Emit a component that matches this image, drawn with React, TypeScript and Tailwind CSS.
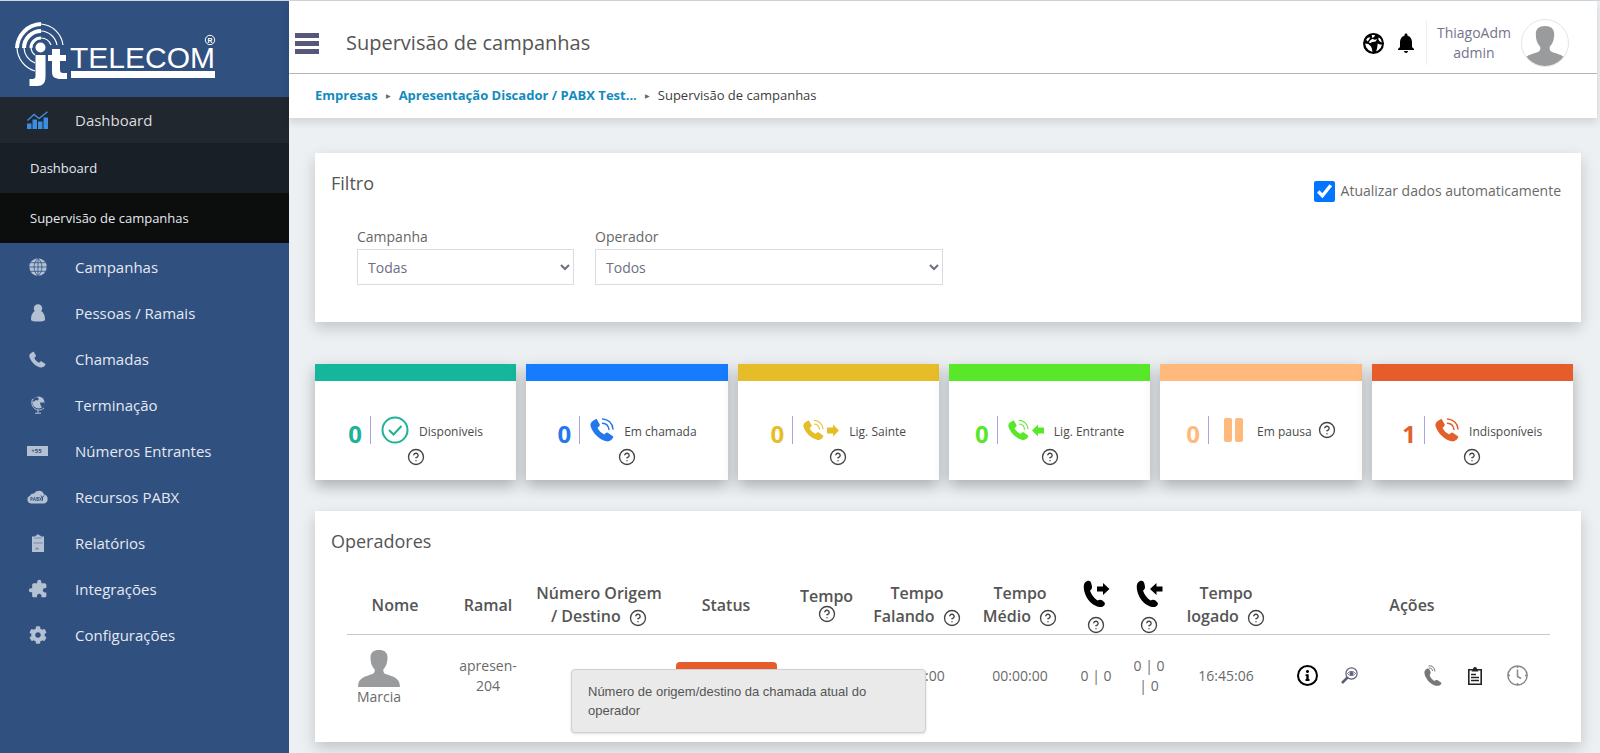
import React, { useState } from 'react';
import { CircleHelp } from 'lucide-react';
import { FaCog, FaInfo } from 'react-icons/fa';
import { MdExtension, MdNotifications } from 'react-icons/md';

interface IconProps {
  className?: string;
}

interface MenuItem {
  label: string;
  icon: React.ReactNode;
}

interface StatCard {
  label: string;
  value: number;
  bar: string;
  text: string;
  icon: React.ReactNode;
}

const HANDSET =
  'M4 1C6 0 8 1 8.5 4L9 7C9 9 8 10 7 10.5C8 14 11 18 14.5 20.5C16 19.5 18 19.5 19.5 20.5L21.5 22.5C22.5 24 21.5 26 19 27C14 27.5 7 24 3.5 17C.5 11-1 3 4 1Z';

const ROUND_HANDSET =
  'M3.500 2.500L6.500.8L9.800 6.500C10 7.500 9 9 7.500 9.800C8.500 12.500 11.500 15.300 14.500 16.500C15.500 15 16.800 14.300 17.800 14.700L23.300 18.500C23.500 20.500 20 24 16.500 23.300C9 21.500 2.500 15 .5 8C0 5.500 1.500 3.500 3.500 2.500Z';

const HelpIcon: React.FC = () => (
  <CircleHelp className="inline-block size-[18px] shrink-0 text-[#444]" strokeWidth={1.8} />
);

const CallOutIcon: React.FC<IconProps> = ({ className }) => (
  <svg viewBox="0 0 27 28" className={className} fill="currentColor">
    <path d={HANDSET} />
    <path d="M14 6.500h6V3l6.500 6-6.500 6v-3.500h-6z" />
  </svg>
);

const CallInIcon: React.FC<IconProps> = ({ className }) => (
  <svg viewBox="0 0 27 28" className={className} fill="currentColor">
    <path d={HANDSET} />
    <path d="M26.500 6.500h-6V3L14 9l6.500 6v-3.500h6z" />
  </svg>
);

const RingingIcon: React.FC<IconProps> = ({ className }) => (
  <svg viewBox="0 0 24 24" className={className} fill="currentColor">
    <path d={ROUND_HANDSET} />
    <path
      d="M12.500.9C18 1.200 22.500 5 23 11M12.500 5.200C16 5.300 18.500 8 19 11.500"
      fill="none"
      stroke="currentColor"
      strokeWidth="1.500"
      strokeLinecap="round"
    />
  </svg>
);

const RingingArrowIcon: React.FC<{ incoming?: boolean }> = ({ incoming }) => (
  <svg viewBox="0 0 36 22" className="h-[22px] w-9" fill="currentColor">
    <svg width="21" height="22" viewBox="0 0 24 24">
      <path d={ROUND_HANDSET} />
      <path
        d="M12.500.9C18 1.200 22.500 5 23 11M12.500 5.200C16 5.300 18.500 8 19 11.500"
        fill="none"
        stroke="currentColor"
        strokeWidth="1.300"
      />
    </svg>
    {incoming ? (
      <path d="M36 8.500h-6V5.500L24 11.500l6 6v-3h6z" />
    ) : (
      <path d="M24 8.500h6V5.500l6 6-6 6v-3h-6z" />
    )}
  </svg>
);

const CheckIcon: React.FC = () => (
  <svg viewBox="0 0 28 28" className="size-7" fill="none" stroke="currentColor" strokeWidth="2">
    <circle cx="14" cy="14" r="12.500" />
    <path d="M8 14l4.500 4.500L20.500 10" />
  </svg>
);

const PauseIcon: React.FC = () => (
  <svg viewBox="0 0 20 26" className="mx-1 h-[26px] w-5" fill="currentColor">
    <rect x="1" y="1" width="8" height="24" rx="2" />
    <rect x="12" y="1" width="8" height="24" rx="2" />
  </svg>
);

const PersonShape: React.FC<IconProps> = ({ className }) => (
  <svg viewBox="0 0 42 37" className={className} fill="#999b9d">
    <path d="M21 0C26.500 0 29.500 2.500 29.500 7.500C29.500 12.500 28 17 25.500 19C25 21.500 25.500 23 27.500 24C34 26.500 42 27 42 37H0C0 27 8 26.500 14.500 24C16.500 23 17 21.500 16.500 19C14 17 12.500 12.500 12.500 7.500C12.500 2.500 15.500 0 21 0Z" />
  </svg>
);

const WorldIcon: React.FC = () => (
  <svg viewBox="0 0 20 20" className="size-[21px]">
    <circle cx="10" cy="10" r="9" fill="#000" stroke="#000" strokeWidth="2" />
    <path
      d="M3 6.500L4.500 4.500L7 4L6 6L4.500 8ZM8.500 2L11.500 1.800L10.500 4L8.500 4.500ZM7 7L9 5.500L11 6.500L13.500 6L12 8L9 8.500L7 9.500L5.500 9ZM2 10L5 10.500L7.500 12.500L8.500 15L9 18L5.500 16.500L3 13.500ZM15 4L17 6L18 9L16 8L14.500 6ZM14 10L16 11L18 11L17 14L14.500 16.500L12.500 17.500L13.500 14Z"
      fill="#fff"
    />
  </svg>
);

const ChartIcon: React.FC = () => (
  <svg viewBox="0 0 21 18" className="h-[18px] w-[21px]" fill="#3d8de0">
    <path d="M0 12.500h4.500V18H0zM5.500 8.500H10V18H5.500zM11 10.500h4.500V18H11zM16.500 6.500H21V18h-4.500z" />
    <path d="M.5 9.500L7 3.500L12 7.500L20.500.7" fill="none" stroke="#3d8de0" strokeWidth="1.400" />
  </svg>
);

const GridGlobeIcon: React.FC = () => (
  <svg viewBox="0 0 18 18" className="size-[18px]">
    <circle cx="9" cy="9" r="8.700" fill="currentColor" />
    <path
      d="M9 0v18M0 9h18M1.500 4.700h15M1.500 13.300h15M9 .3C3.800 5 3.800 13 9 17.700M9 .3C14.200 5 14.200 13 9 17.700"
      fill="none"
      stroke="#305080"
      strokeWidth=".8"
    />
  </svg>
);

const UserIcon: React.FC = () => (
  <svg viewBox="0 0 14 18" className="h-[18px] w-3.5" fill="currentColor">
    <circle cx="7" cy="4.500" r="4.200" />
    <path d="M4 7h6C12.500 8.500 14 11 14 16C13 18 1 18 0 16C0 11 1.500 8.500 4 7Z" />
  </svg>
);

const PhoneIcon: React.FC = () => (
  <svg viewBox="0 0 24 24" className="size-[17px]" fill="currentColor">
    <path d={ROUND_HANDSET} />
  </svg>
);

const StandGlobeIcon: React.FC = () => (
  <svg viewBox="0 0 14 18" className="h-[18px] w-3.5">
    <circle cx="7.500" cy="6.500" r="6" fill="currentColor" />
    <path d="M1.500 3C-.5 8 2 13.500 7 14C9.500 14.200 11.500 13.500 13 12M7 14v3M4 17.200h6" fill="none" stroke="currentColor" />
    <path d="M6 1L8 3L6.500 4.500L4.500 4L3 6L2 4.500L3.500 2ZM9 6.500h4.500L13 10l-2 1.500L9.500 9z" fill="#305080" />
  </svg>
);

const NumberIcon: React.FC = () => (
  <svg viewBox="0 0 21 10" className="h-2.5 w-[21px]">
    <rect width="21" height="10" fill="currentColor" />
    <text x="9.500" y="7" fontSize="6" fontWeight="700" textAnchor="middle" fill="#305080">
      +55
    </text>
  </svg>
);

const CloudIcon: React.FC = () => (
  <svg viewBox="0 0 21 14" className="h-3.5 w-[21px]">
    <path
      d="M4 13.500A4 4 0 0 1 3 5.800A4 4 0 0 1 7 3.500A5.500 5.500 0 0 1 17 4.500A4.600 4.600 0 0 1 17 13.500Z"
      fill="currentColor"
    />
    <text x="9" y="11" fontSize="4.500" fontWeight="700" textAnchor="middle" fill="#305080">
      PABX
    </text>
    <path d="M15.500 10.500V7M14 5.500l1.500 2 1.500-2" fill="none" stroke="#305080" />
  </svg>
);

const ReportIcon: React.FC = () => (
  <svg viewBox="0 0 12 18" className="h-[18px] w-3">
    <path d="M0 2.500h3l1-1.300h1a1 1 0 0 1 2 0h1l1 1.300h3V18H0z" fill="currentColor" />
    <path d="M2.500 4h7M1.500 9h9M3 15h4M5 13v2" fill="none" stroke="#305080" strokeWidth=".5" />
  </svg>
);

const InfoIcon: React.FC = () => (
  <span className="flex size-[21px] items-center justify-center rounded-full border-2 border-black">
    <FaInfo className="size-[11px] text-black" />
  </span>
);

const WatchIcon: React.FC = () => (
  <svg viewBox="0 0 17 17" className="size-[17px]" fill="none" stroke="#5d5d78">
    <circle cx="10.500" cy="6.500" r="5.600" strokeWidth="1.200" />
    <path d="M6.500 10.500L1 16" strokeWidth="2.500" />
    <path d="M6.500 6.500C8.500 3.800 12.500 3.800 14.500 6.500C12.500 9.200 8.500 9.200 6.500 6.500Z" />
    <circle cx="10.500" cy="6.500" r="1.500" fill="#5d5d78" />
  </svg>
);

const WhisperIcon: React.FC = () => (
  <svg viewBox="0 0 18 21" className="h-[21px] w-[18px]" fill="#777">
    <path d="M2.500 4C5 2.500 6 5 6.500 7C7 9 5.500 9 5.800 10.500C6.500 13 8.500 15 10.500 16C12 14.500 13.500 15 15.500 16.500C18.500 18 17.500 19.500 15.500 20.500C11 22 5 18.500 2 12.500C-.3 8.500 0 5.500 2.500 4Z" />
    <path d="M4.500 1C8 0 11 3 10.800 6.500M5 3C7 2.800 8.500 4 8.500 6" fill="none" stroke="#777" />
  </svg>
);

const ClipboardIcon: React.FC = () => (
  <svg viewBox="0 0 14 18" className="h-[18px] w-3.5" fill="none" stroke="#222" strokeWidth="1.600">
    <path d="M.8 2.800h12.400v14.400H.8zM3 7.500h5M3 10.500h8M3 13.500h8" />
    <path d="M3.500 4.500h7L9 2a2 2 0 0 0-4 0z" fill="#222" stroke="none" />
  </svg>
);

const ClockIcon: React.FC = () => (
  <svg viewBox="0 0 21 21" className="size-[21px]" fill="none" stroke="#888" strokeWidth="1.500">
    <circle cx="10.500" cy="10.500" r="9.600" />
    <path d="M10.500 4.500v7l3.500 2M10.500 1v2M10.500 18v2M1 10.500h2M18 10.500h2" />
  </svg>
);

const Logo: React.FC = () => (
  <svg viewBox="0 0 205 68" className="h-[68px] w-[205px]" fill="#fff">
    <g fill="none" stroke="#fff">
      <path d="M2 26A25 25 0 0 1 26 2" strokeWidth="4" />
      <path d="M9 26A17 17 0 0 1 26 9" strokeWidth="4" />
      <path d="M16 26A10 10 0 0 1 26 16" strokeWidth="3" />
      <path d="M26 2A24 24 0 0 1 48 23M26 9A17 17 0 0 1 42 23M26 16A11 11 0 0 1 36 23" strokeWidth="1.200" />
      <path d="M2 26A25 25 0 0 0 20 49M9 26A17 17 0 0 0 20 41M16 26A10 10 0 0 0 20 33" strokeWidth="1.200" />
    </g>
    <circle cx="25.500" cy="25.500" r="5" />
    <path d="M20.500 33h10v22c0 6-3 9-8 9h-8v-7h3c2 0 3-1 3-3zM37 27h8v6h6v6h-6v9c0 2 1 3 3 3h4v6h-6c-6 0-9-2-9-7v-11h-4v-6h4z" />
    <text x="55" y="46" fontFamily="Liberation Sans, sans-serif" fontSize="30">
      TELECOM
    </text>
    <rect x="56" y="49" width="144" height="7" />
    <circle cx="195" cy="18" r="4.700" fill="none" stroke="#fff" />
    <text x="195" y="21" fontFamily="Liberation Sans, sans-serif" fontSize="7" fontWeight="700" textAnchor="middle">
      R
    </text>
  </svg>
);

const menuItems: MenuItem[] = [
  { label: 'Campanhas', icon: <GridGlobeIcon /> },
  { label: 'Pessoas / Ramais', icon: <UserIcon /> },
  { label: 'Chamadas', icon: <PhoneIcon /> },
  { label: 'Terminação', icon: <StandGlobeIcon /> },
  { label: 'Números Entrantes', icon: <NumberIcon /> },
  { label: 'Recursos PABX', icon: <CloudIcon /> },
  { label: 'Relatórios', icon: <ReportIcon /> },
  { label: 'Integrações', icon: <MdExtension className="size-5 -scale-x-100" /> },
  { label: 'Configurações', icon: <FaCog className="size-[18px]" /> },
];

const stats: StatCard[] = [
  { label: 'Disponiveis', value: 0, bar: 'bg-[#14b79b]', text: 'text-[#20b296]', icon: <CheckIcon /> },
  { label: 'Em chamada', value: 0, bar: 'bg-[#177bff]', text: 'text-[#2478ec]', icon: <RingingIcon className="size-6" /> },
  { label: 'Lig. Sainte', value: 0, bar: 'bg-[#e6bd29]', text: 'text-[#e6bd29]', icon: <RingingArrowIcon /> },
  { label: 'Lig. Entrante', value: 0, bar: 'bg-[#58e829]', text: 'text-[#58e829]', icon: <RingingArrowIcon incoming /> },
  { label: 'Em pausa', value: 0, bar: 'bg-[#ffb97c]', text: 'text-[#ffb97c]', icon: <PauseIcon /> },
  { label: 'Indisponíveis', value: 1, bar: 'bg-[#e75c2b]', text: 'text-[#e2602b]', icon: <RingingIcon className="size-6" /> },
];

const Sidebar: React.FC = () => (
  <aside className="w-[289px] shrink-0 bg-[#305080] text-[15px] text-[#e4e9f1]">
    <div className="px-[15px] pt-[21px]">
      <Logo />
    </div>
    <nav className="pt-[7px]">
      <a href="#dashboard" className="flex h-[46px] items-center bg-[#20272f] text-[#dcdcdc]">
        <span className="flex w-[75px] justify-center">
          <ChartIcon />
        </span>
        Dashboard
      </a>
      <a href="#painel" className="flex h-[50px] items-center bg-[#191f26] px-[30px] pt-0.5 text-[13px]">
        Dashboard
      </a>
      <a href="#supervisao" className="flex h-[50px] items-center bg-[#0c0d0d] px-[30px] pt-0.5 text-[13px]">
        Supervisão de campanhas
      </a>
      <div className="pt-px">
        {menuItems.map((item) => (
          <a key={item.label} href="#menu" className="flex h-[46px] items-center">
            <span className="flex w-[75px] justify-center text-[#b4c1d3]">{item.icon}</span>
            {item.label}
          </a>
        ))}
      </div>
    </nav>
  </aside>
);

const Header: React.FC = () => (
  <header className="mr-[3px] bg-white shadow-[0_4px_8px_rgba(0,0,0,0.12)]">
    <div className="flex h-[73px] items-center justify-between border-b border-[#b5b5b5] pt-3 pr-7 pl-1.5">
      <div className="flex items-center gap-[27px]">
        <button type="button" aria-label="Menu" className="flex flex-col gap-[3px]">
          <span className="h-[5px] w-6 bg-[#57577a]" />
          <span className="h-[5px] w-6 bg-[#57577a]" />
          <span className="h-[5px] w-6 bg-[#57577a]" />
        </button>
        <h1 className="text-xl font-medium text-[#555]">Supervisão de campanhas</h1>
      </div>
      <div className="flex items-center">
        <button type="button" aria-label="Idioma">
          <WorldIcon />
        </button>
        <button type="button" aria-label="Notificações" className="ml-2.5">
          <MdNotifications className="size-6 text-black" />
        </button>
        <div className="ml-2 flex h-11 items-center border-l border-[#eee] px-2.5 text-center text-sm leading-5 text-[#74748c]">
          <span>
            ThiagoAdm
            <br />
            admin
          </span>
        </div>
        <span className="flex size-12 items-end justify-center overflow-hidden rounded-full border border-[#e5e5e5]">
          <PersonShape className="h-10 w-[46px] shrink-0" />
        </span>
      </div>
    </div>
    <nav className="flex h-11 items-center gap-2 px-[26px] text-[13px] text-[#3c3c3c]">
      <a href="#empresas" className="font-bold text-[#138bbd]">
        Empresas
      </a>
      <span className="text-[6px] text-[#666]">▶</span>
      <a href="#empresa" className="font-bold text-[#138bbd]">
        Apresentação Discador / PABX Test...
      </a>
      <span className="text-[6px] text-[#666]">▶</span>
      <span>Supervisão de campanhas</span>
    </nav>
  </header>
);

const FilterPanel: React.FC = () => {
  const [autoRefresh, setAutoRefresh] = useState(true);

  return (
    <section className="bg-white px-4 pt-4 pb-[37px] shadow-[0_6px_14px_rgba(0,0,0,0.18)]">
      <div className="flex items-start justify-between">
        <h2 className="text-lg leading-7 font-medium text-[#555]">Filtro</h2>
        <label className="flex items-center gap-1.5 pt-2.5 pr-1 text-sm leading-6 text-[#6a6a6a]">
          <input
            type="checkbox"
            checked={autoRefresh}
            onChange={(e) => setAutoRefresh(e.target.checked)}
            className="size-[21px] accent-[#0075ff]"
          />
          Atualizar dados automaticamente
        </label>
      </div>
      <div className="mt-[22px] flex gap-[21px] px-[26px] text-sm text-[#666]">
        <div className="w-[217px]">
          <label htmlFor="campanha" className="block leading-6">
            Campanha
          </label>
          <select id="campanha" className="block h-9 w-full border border-[#dcdce0] bg-white px-1.5 text-[#6e6e84]">
            <option>Todas</option>
          </select>
        </div>
        <div className="w-[348px]">
          <label htmlFor="operador" className="block leading-6">
            Operador
          </label>
          <select id="operador" className="block h-9 w-full border border-[#dcdce0] bg-white px-1.5 text-[#6e6e84]">
            <option>Todos</option>
          </select>
        </div>
      </div>
    </section>
  );
};

const StatCards: React.FC = () => (
  <section className="mt-[42px] mr-2 grid grid-cols-6 gap-2.5">
    {stats.map((stat) => (
      <div key={stat.label} className="h-[116px] bg-white shadow-[0_6px_14px_rgba(0,0,0,0.28)]">
        <div className={`h-[17px] ${stat.bar}`} />
        <div className="flex flex-wrap items-center justify-center gap-x-1.5 gap-y-0.5 px-6 pt-[33px]">
          <div className="flex items-center">
            <span className={`mt-2 text-2xl leading-6 font-bold ${stat.text}`}>{stat.value}</span>
            <span className="ml-2 h-7 w-px bg-[#a9a0e6]" />
            <span className={`ml-2.5 ${stat.text}`}>{stat.icon}</span>
            <span className="mt-1 ml-2.5 text-xs whitespace-nowrap text-[#4a4a4a]">{stat.label}</span>
          </div>
          <HelpIcon />
        </div>
      </div>
    ))}
  </section>
);

const OperatorsPanel: React.FC = () => (
  <section className="mt-[31px] bg-white px-4 pt-4 pb-[25px] shadow-[0_6px_14px_rgba(0,0,0,0.18)]">
    <h2 className="text-lg leading-7 font-medium text-[#555]">Operadores</h2>
    <div className="pt-[22px] pr-[15px] pl-4">
      <table className="w-full table-fixed text-center text-sm text-[#6a6a6a]">
        <thead className="text-base leading-[23px] text-[#555]">
          <tr className="h-[57px] border-b border-[#c8c8c8] [&>th]:font-semibold">
            <th className="w-[96px]">Nome</th>
            <th className="w-[90px]">Ramal</th>
            <th className="relative w-[132px] whitespace-nowrap">
              Número Origem
              <br />/ Destino&nbsp; <HelpIcon />
              <div
                role="tooltip"
                className="absolute top-[92px] left-[38px] z-10 w-[355px] rounded-sm border border-[#cfcfcf] bg-[#eaeaea] px-4 py-3 text-left font-[Liberation_Sans] text-[13px] leading-[19px] font-normal whitespace-normal text-[#555] shadow-sm"
              >
                Número de origem/destino da chamada atual do
                <br />
                operador
              </div>
            </th>
            <th className="w-[122px]">Status</th>
            <th className="w-[79px]">
              <span className="flex flex-col items-center leading-[18px]">
                Tempo
                <HelpIcon />
              </span>
            </th>
            <th className="w-[102px] whitespace-nowrap">
              Tempo
              <br />
              Falando&nbsp; <HelpIcon />
            </th>
            <th className="w-[104px] whitespace-nowrap">
              Tempo
              <br />
              Médio&nbsp; <HelpIcon />
            </th>
            <th className="w-[48px] align-bottom">
              <span className="flex flex-col items-center gap-2">
                <CallOutIcon className="h-7 w-[27px] text-black" />
                <HelpIcon />
              </span>
            </th>
            <th className="w-[58px] align-bottom">
              <span className="flex flex-col items-center gap-2">
                <CallInIcon className="h-7 w-[27px] text-black" />
                <HelpIcon />
              </span>
            </th>
            <th className="w-[96px] whitespace-nowrap">
              Tempo
              <br />
              logado&nbsp; <HelpIcon />
            </th>
            <th className="w-[276px]">Ações</th>
          </tr>
        </thead>
        <tbody>
          <tr className="h-[83px] leading-5">
            <td>
              <div className="flex w-fit flex-col items-center pt-1.5 pl-2.5">
                <PersonShape className="h-[37px] w-[42px]" />
                <span>Marcia</span>
              </div>
            </td>
            <td>
              apresen-
              <br />
              204
            </td>
            <td></td>
            <td>
              <span className="mx-auto block h-7 w-[101px] rounded bg-[#e75c2b]" />
            </td>
            <td></td>
            <td>00:00:00</td>
            <td>00:00:00</td>
            <td>0 | 0</td>
            <td>
              0 | 0
              <br />| 0
            </td>
            <td>16:45:06</td>
            <td>
              <div className="grid grid-cols-6 items-center justify-items-center px-3">
                <button type="button" aria-label="Informações">
                  <InfoIcon />
                </button>
                <button type="button" aria-label="Monitorar">
                  <WatchIcon />
                </button>
                <button type="button" aria-label="Escutar" className="col-start-4">
                  <WhisperIcon />
                </button>
                <button type="button" aria-label="Relatório">
                  <ClipboardIcon />
                </button>
                <button type="button" aria-label="Histórico">
                  <ClockIcon />
                </button>
              </div>
            </td>
          </tr>
        </tbody>
      </table>
    </div>
  </section>
);

const App: React.FC = () => (
  <div className="flex min-h-screen border-t border-[#cfd6de] bg-[#ecf0f3] font-[Open_Sans,sans-serif]">
    <Sidebar />
    <main className="min-w-0 flex-1">
      <Header />
      <div className="pt-[35px] pr-[19px] pb-3 pl-[26px]">
        <FilterPanel />
        <StatCards />
        <OperatorsPanel />
      </div>
    </main>
  </div>
);

export default App;
